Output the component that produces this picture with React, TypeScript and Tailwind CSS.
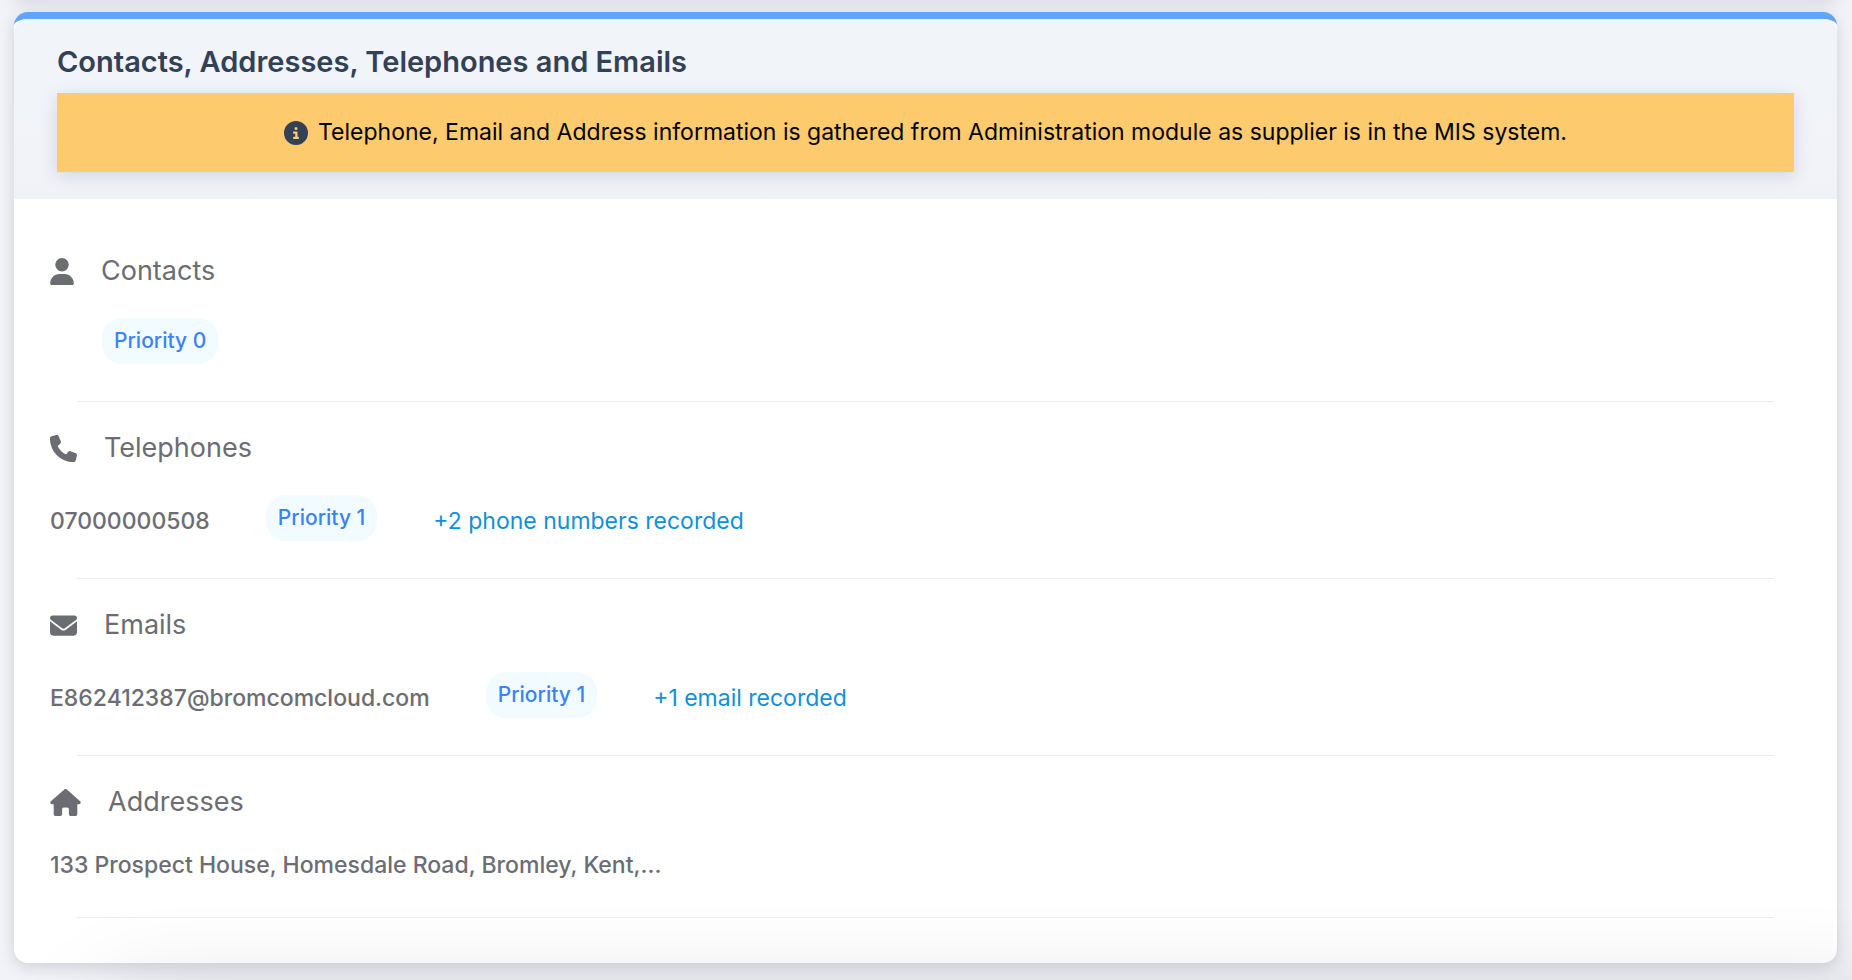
import type { ReactNode } from 'react'
import type { IconType } from 'react-icons'
import { FaCircleInfo, FaEnvelope, FaHouse, FaPhone, FaUser } from 'react-icons/fa6'

interface SectionProps {
  icon: IconType
  iconClass: string
  title: string
  children: ReactNode
}

function Section({ icon: Icon, iconClass, title, children }: SectionProps) {
  return (
    <section className="pt-6">
      <h3 className="flex h-11 items-center gap-[27px] px-9 text-[27px] text-[#6b6d72]">
        <Icon className={`shrink-0 ${iconClass}`} />
        {title}
      </h3>
      {children}
      <hr className="mx-[63px] border-0 border-t border-[#ececee]" />
    </section>
  )
}

function Priority({ level }: { level: number }) {
  return (
    <span className="flex h-[46px] items-center rounded-[20px] bg-[#f2fbff] px-3 text-[21px] font-medium text-[#3b82f6]">
      Priority {level}
    </span>
  )
}

interface RecordRowProps {
  value: string
  level: number
  more: string
}

function RecordRow({ value, level, more }: RecordRowProps) {
  return (
    <div className="flex h-[108px] items-start gap-14 px-9 pt-[25px] text-[23px] leading-8">
      <span className="pt-[10px] font-medium text-[#6b6d72]">{value}</span>
      <Priority level={level} />
      <a href="#more" className="pt-[10px] text-[#1090d8]">
        {more}
      </a>
    </div>
  )
}

export default function App() {
  return (
    <div className="h-screen overflow-hidden bg-[#f1f3f9] font-['Inter',sans-serif]">
      {/* Previous panel, scrolled out of view */}
      <div className="-mt-10 mr-[15px] mb-3 ml-[14px] h-10 bg-white shadow-[0_4px_16px_rgba(0,0,0,0.1)]" />

      <main className="mr-[15px] ml-[14px] rounded-[14px] border-t-[7px] border-[#60a5fa] bg-white shadow-[0_4px_16px_rgba(0,0,0,0.14)]">
        <header className="rounded-t-[14px] bg-linear-to-b from-[#f1f5fa] to-[#f1f2f7] px-[43px] pt-6 pb-[27px]">
          <h2 className="h-[50px] text-[29px] leading-[38px] font-semibold text-[#334155]">
            Contacts, Addresses, Telephones and Emails
          </h2>
          <div
            role="status"
            className="flex h-[79px] items-center justify-center gap-[10px] bg-[#fdcb6e] text-[23px] text-black shadow-[0_4px_16px_rgba(50,70,90,0.16)]"
          >
            <FaCircleInfo className="text-2xl text-[#334155]" />
            Telephone, Email and Address information is gathered from Administration module as supplier is in the MIS system.
          </div>
        </header>

        <div className="pt-[26px] pb-[45px]">
          <Section icon={FaUser} iconClass="w-6" title="Contacts">
            <div className="flex h-[108px] items-start pt-[25px] pl-[88px]">
              <Priority level={0} />
            </div>
          </Section>

          <Section icon={FaPhone} iconClass="w-[27px]" title="Telephones">
            <RecordRow value="07000000508" level={1} more="+2 phone numbers recorded" />
          </Section>

          <Section icon={FaEnvelope} iconClass="w-[27px]" title="Emails">
            <RecordRow value="E862412387@bromcomcloud.com" level={1} more="+1 email recorded" />
          </Section>

          <Section icon={FaHouse} iconClass="w-[31px]" title="Addresses">
            <p className="h-[93px] px-9 pt-[25px] text-[23px] leading-8 font-medium text-[#6b6d72]">
              133 Prospect House, Homesdale Road, Bromley, Kent,...
            </p>
          </Section>
        </div>
      </main>

      {/* Next panel, only its shadow reaches the fold */}
      <div className="relative mt-10 -mr-10 ml-[110px] h-20 rounded-[14px] bg-white shadow-[0_0_100px_rgba(0,0,0,0.17)]" />
    </div>
  )
}
